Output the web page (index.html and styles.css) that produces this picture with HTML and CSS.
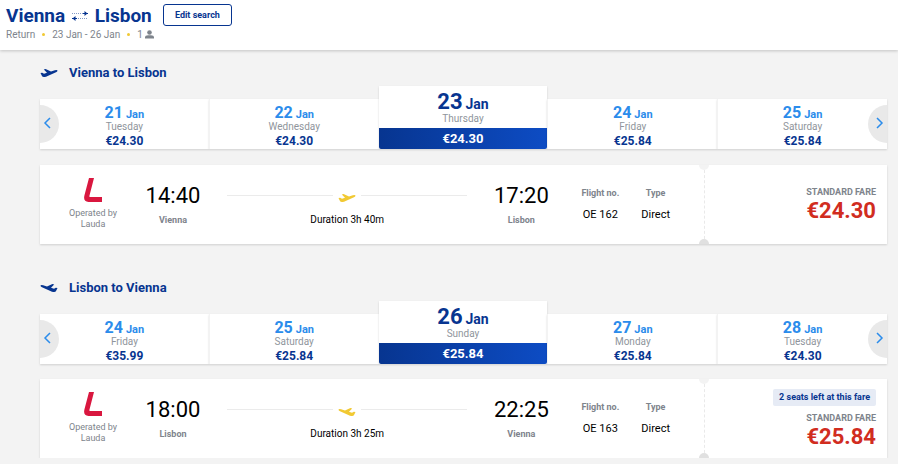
FILE: index.html
```
<!DOCTYPE html>
<html lang="en">
<head>
    <meta charset="UTF-8">
    <meta name="viewport" content="width=device-width, initial-scale=1.0">
    <title>Vienna to Lisbon flights</title>
    <link rel="stylesheet" href="styles.css">
</head>
<body>
    <svg class="sprite" aria-hidden="true">
        <symbol id="plane" viewBox="0 0 18 10">
            <path d="M0.5 5 L2.2 4.7 L4 5.7 L7 4.8 L3.8 1.5 L5.6 0.900 L11 3.500 L14.800 2.300 Q17.200 1.600 17.500 2.500 Q17.600 3.500 16 4.200 L6 8.700 Q3 9.600 2.100 8.300 Z"/>
        </symbol>
    </svg>

    <header class="trip-header">
        <div>
            <h1>Vienna
                <svg class="swap" viewBox="0 0 18 12" role="img" aria-label="and back">
                    <path class="trail" d="M1 3.5h12M5 8.5h12" stroke-dasharray="1 1"/>
                    <path d="M12 3.500h5M1 8.500h5"/>
                    <path class="solid" d="M13.500 1 16.500 3.500 13.500 6zM4.500 6 1.500 8.500 4.500 11z"/>
                </svg>
                Lisbon</h1>
            <p class="trip-info">
                <span>Return</span><i class="dot"></i><span>23 Jan - 26 Jan</span><i class="dot"></i><span>1</span>
                <svg class="person" viewBox="0 0 9 9"><circle cx="4.5" cy="2.5" r="2.3"/><path d="M0 8.5V7Q0 5.5 3 5.2H6Q9 5.5 9 7V8.5Z"/></svg>
            </p>
        </div>
        <button type="button" class="edit-search">Edit search</button>
    </header>

    <main>
        <section class="journey">
            <h2><svg class="plane"><use href="#plane"/></svg>Vienna to Lisbon</h2>
            <div class="carousel">
                <button type="button" class="day"><span class="date">21 <small>Jan</small></span><span class="weekday">Tuesday</span><span class="price">€24.30</span></button>
                <button type="button" class="day"><span class="date">22 <small>Jan</small></span><span class="weekday">Wednesday</span><span class="price">€24.30</span></button>
                <button type="button" class="day selected"><span class="date">23 <small>Jan</small></span><span class="weekday">Thursday</span><span class="price">€24.30</span></button>
                <button type="button" class="day"><span class="date">24 <small>Jan</small></span><span class="weekday">Friday</span><span class="price">€25.84</span></button>
                <button type="button" class="day"><span class="date">25 <small>Jan</small></span><span class="weekday">Saturday</span><span class="price">€25.84</span></button>
                <button type="button" class="arrow prev" aria-label="Previous dates"><svg viewBox="0 0 8 12"><path d="M7 1 2 6l5 5"/></svg></button>
                <button type="button" class="arrow next" aria-label="Next dates"><svg viewBox="0 0 8 12"><path d="M1 1l5 5-5 5"/></svg></button>
            </div>
            <article class="flight">
                <div class="flight-main">
                    <div class="operator">
                        <svg viewBox="0 0 18 24"><path d="M5 0h5L5.500 17.500Q5 19 6.500 19H18v5H4.500Q-1 24 .4 17.500Z"/></svg>
                        Operated by Lauda
                    </div>
                    <div class="stop"><span class="time">14:40</span><span class="city">Vienna</span></div>
                    <div class="route">
                        <div class="line"><svg class="plane"><use href="#plane"/></svg></div>
                        Duration 3h 40m
                    </div>
                    <div class="stop"><span class="time">17:20</span><span class="city">Lisbon</span></div>
                    <dl class="details">
                        <div><dt>Flight no.</dt><dd>OE 162</dd></div>
                        <div><dt>Type</dt><dd>Direct</dd></div>
                    </dl>
                </div>
                <div class="fare">
                    <span class="fare-name">STANDARD FARE</span>
                    <span class="fare-price">€24.30</span>
                </div>
            </article>
        </section>

        <section class="journey return">
            <h2><svg class="plane"><use href="#plane"/></svg>Lisbon to Vienna</h2>
            <div class="carousel">
                <button type="button" class="day"><span class="date">24 <small>Jan</small></span><span class="weekday">Friday</span><span class="price">€35.99</span></button>
                <button type="button" class="day"><span class="date">25 <small>Jan</small></span><span class="weekday">Saturday</span><span class="price">€25.84</span></button>
                <button type="button" class="day selected"><span class="date">26 <small>Jan</small></span><span class="weekday">Sunday</span><span class="price">€25.84</span></button>
                <button type="button" class="day"><span class="date">27 <small>Jan</small></span><span class="weekday">Monday</span><span class="price">€25.84</span></button>
                <button type="button" class="day"><span class="date">28 <small>Jan</small></span><span class="weekday">Tuesday</span><span class="price">€24.30</span></button>
                <button type="button" class="arrow prev" aria-label="Previous dates"><svg viewBox="0 0 8 12"><path d="M7 1 2 6l5 5"/></svg></button>
                <button type="button" class="arrow next" aria-label="Next dates"><svg viewBox="0 0 8 12"><path d="M1 1l5 5-5 5"/></svg></button>
            </div>
            <article class="flight">
                <div class="flight-main">
                    <div class="operator">
                        <svg viewBox="0 0 18 24"><path d="M5 0h5L5.500 17.500Q5 19 6.500 19H18v5H4.500Q-1 24 .4 17.500Z"/></svg>
                        Operated by Lauda
                    </div>
                    <div class="stop"><span class="time">18:00</span><span class="city">Lisbon</span></div>
                    <div class="route">
                        <div class="line"><svg class="plane"><use href="#plane"/></svg></div>
                        Duration 3h 25m
                    </div>
                    <div class="stop"><span class="time">22:25</span><span class="city">Vienna</span></div>
                    <dl class="details">
                        <div><dt>Flight no.</dt><dd>OE 163</dd></div>
                        <div><dt>Type</dt><dd>Direct</dd></div>
                    </dl>
                </div>
                <div class="fare">
                    <span class="seats">2 seats left at this fare</span>
                    <span class="fare-name">STANDARD FARE</span>
                    <span class="fare-price">€25.84</span>
                </div>
            </article>
        </section>
    </main>
</body>
</html>
```

FILE: styles.css
```
* {
    box-sizing: border-box;
}
body {
    margin: 0;
    background-color: #f3f3f3;
    color: #000;
    font-family: Roboto, sans-serif;
    font-size: 10px;
}
button {
    font-family: inherit;
    cursor: pointer;
}
h1, h2, p, dl, dd {
    margin: 0;
}
.sprite {
    display: none;
}

/* header */
.trip-header {
    display: flex;
    align-items: flex-start;
    gap: 9px;
    height: 50px;
    padding: 4px 6px;
    background: white;
    box-shadow: 0 1px 3px rgba(0,0,0,0.2);
}
h1 {
    color: #073590;
    font-size: 19px;
    line-height: 24px;
}
.swap {
    width: 18px;
    height: 12px;
    margin: 0 1px;
    fill: none;
    stroke: #073590;
}
.swap .trail {
    opacity: 0.5;
}
.swap .solid {
    fill: #073590;
    stroke: none;
}
.trip-info {
    display: flex;
    align-items: center;
    color: #7e848c;
    line-height: 13px;
}
.dot {
    width: 3px;
    height: 3px;
    margin: 0 7px;
    border-radius: 50%;
    background: #f1c933;
}
.person {
    width: 9px;
    height: 9px;
    margin-left: 2px;
    fill: #7e848c;
}
.edit-search {
    height: 22px;
    padding: 0 11px;
    border: 1px solid #073590;
    border-radius: 3px;
    background: white;
    color: #073590;
    font-size: 9px;
    font-weight: bold;
}

/* one direction of the trip */
.journey {
    padding: 14px 11px 0 40px;
}
.return {
    padding-top: 35px;
}
h2 {
    display: flex;
    align-items: center;
    gap: 11px;
    margin-bottom: 5px;
    color: #073590;
    font-size: 13px;
    line-height: 17px;
}
.plane {
    width: 18px;
    height: 10px;
    fill: #073590;
}
.return .plane {
    transform: scaleX(-1);
}

/* date carousel */
.carousel {
    position: relative;
    display: flex;
    align-items: flex-end;
    height: 63px;
    margin-bottom: 16px;
}
.return .carousel {
    margin-bottom: 15px;
}
.day {
    display: flex;
    flex: 1;
    flex-direction: column;
    align-items: center;
    height: 50px;
    padding: 6px 0 0;
    border: none;
    background: white;
    box-shadow: 0 1px 2px rgba(0,0,0,0.15);
}
.day + .day {
    border-left: 1px solid #f3f3f3;
}
.date {
    display: flex;
    align-items: baseline;
    gap: 3px;
    height: 16px;
    color: #2b8ceb;
    font-size: 16px;
    font-weight: bold;
    line-height: 16px;
}
.date small {
    font-size: 11px;
}
.weekday {
    color: #8f959c;
    font-size: 10px;
    line-height: 11px;
}
.price {
    margin-top: 1px;
    color: #073590;
    font-size: 12px;
    font-weight: bold;
    line-height: 16px;
}
.day.selected {
    height: 63px;
    padding-top: 5px;
    border-left: none;
}
.selected .date {
    height: 22px;
    color: #073590;
    font-size: 22px;
    line-height: 22px;
}
.selected .date small {
    font-size: 14px;
}
.selected .weekday {
    line-height: 12px;
}
.selected .price {
    align-self: stretch;
    margin-top: 3px;
    border-radius: 0 0 2px 2px;
    background: linear-gradient(to right, #073590, #0d4cc4);
    color: white;
    font-size: 13px;
    line-height: 21px;
}
.arrow {
    position: absolute;
    bottom: 6px;
    width: 19px;
    height: 38px;
    padding: 0 8px 2px 3px;
    border: none;
    background: #e9e9e9;
}
.arrow svg {
    display: block;
    width: 8px;
    height: 12px;
    fill: none;
    stroke: #2b8ceb;
    stroke-width: 1.5;
}
.prev {
    left: 0;
    border-radius: 0 19px 19px 0;
}
.next {
    right: 0;
    padding: 0 3px 2px 8px;
    border-radius: 19px 0 0 19px;
}

/* flight card */
.flight {
    display: flex;
    min-height: 79px;
    background: white;
    box-shadow: 0 1px 2px rgba(0,0,0,0.15);
}
.flight-main {
    display: flex;
    flex: 1;
    gap: 25px;
    padding: 13px 34px 0 27px;
}
.operator {
    width: 52px;
    color: #7e848c;
    font-size: 9px;
    line-height: 11px;
    text-align: center;
}
.operator svg {
    display: block;
    width: 18px;
    height: 24px;
    margin: 0 auto 6px;
    fill: #d9173f;
}
.stop {
    display: flex;
    flex-direction: column;
    align-items: center;
    width: 58px;
    padding-top: 5px;
}
.time {
    font-size: 22px;
    line-height: 26px;
}
.city {
    margin-top: 5px;
    color: #7e848c;
    font-size: 9px;
    font-weight: bold;
    line-height: 12px;
}
.route {
    flex: 1;
    padding-top: 12px;
    line-height: 14px;
    text-align: center;
}
.line {
    display: flex;
    gap: 5px;
    margin-bottom: 10px;
}
.line::before, .line::after {
    content: "";
    flex: 1;
    height: 1px;
    margin-top: 5px;
    background: #ebebeb;
}
.line .plane {
    margin-top: 3px;
    fill: #f1c933;
}
.details {
    display: flex;
    gap: 22px;
    padding: 9px 0 0 6px;
    text-align: center;
}
dt {
    color: #7e848c;
    font-size: 9px;
    font-weight: bold;
    line-height: 12px;
}
dd {
    margin-top: 9px;
    font-size: 11px;
    line-height: 14px;
}
.fare {
    position: relative;
    display: flex;
    flex-direction: column;
    align-items: flex-end;
    justify-content: center;
    width: 183px;
    padding-right: 11px;
    border-left: 1px dashed #e9e9e9;
}
/* ticket notches */
.fare::before, .fare::after {
    content: "";
    position: absolute;
    left: -6px;
    width: 10px;
    height: 5px;
    background: #f3f3f3;
}
.fare::before {
    top: 0;
    border-radius: 0 0 5px 5px;
}
.fare::after {
    bottom: 0;
    border-radius: 5px 5px 0 0;
    background: #e0e0e0;
}
.seats {
    margin-bottom: 6px;
    padding: 0 6px;
    border-radius: 2px;
    background: #e6ebf5;
    color: #073590;
    font-size: 9px;
    font-weight: bold;
    line-height: 17px;
}
.fare-name {
    color: #7e848c;
    font-size: 9px;
    font-weight: bold;
    line-height: 12px;
}
.fare-price {
    color: #d12d1f;
    font-size: 22px;
    font-weight: bold;
    line-height: 25px;
}
```
